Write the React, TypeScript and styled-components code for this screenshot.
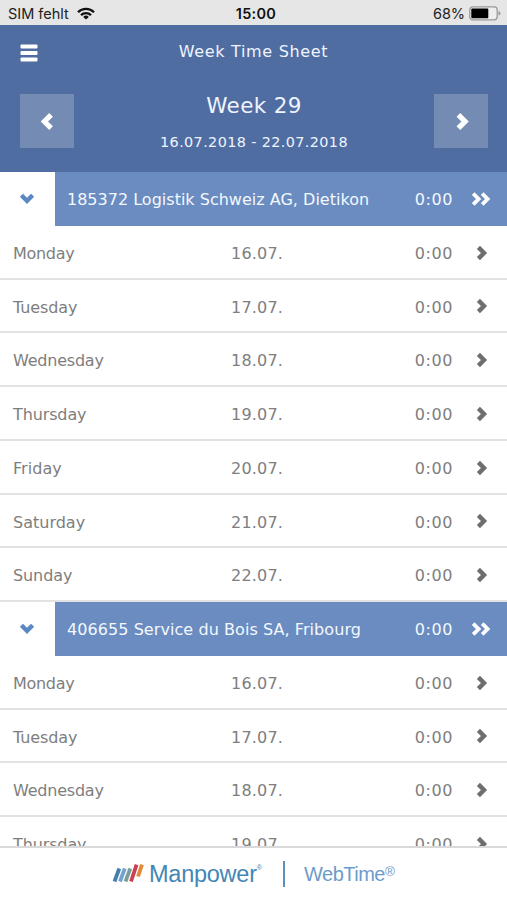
import React from "react";
import styled, { createGlobalStyle } from "styled-components";

const GlobalStyle = createGlobalStyle`
  * { box-sizing: border-box; }
  body { margin: 0; background: #fff; }
`;

const Screen = styled.div`
  width: 507px;
  height: 900px;
  display: flex;
  flex-direction: column;
  overflow: hidden;
  background: #fff;
  font-family: "DejaVu Sans", Verdana, sans-serif;
  font-size: 16px;
  white-space: nowrap;
`;

const StatusBar = styled.div`
  height: 25px;
  flex: none;
  display: grid;
  grid-template-columns: 1fr auto 1fr;
  align-items: center;
  padding: 2px 6px 0 8px;
  background: #e6e6e6;
  color: #222;
  font: 14.5px Inter, sans-serif;
`;

const StatusGroup = styled.div<{ $end?: boolean }>`
  display: flex;
  align-items: center;
  justify-content: ${(p) => (p.$end ? "flex-end" : "flex-start")};
  gap: ${(p) => (p.$end ? 4 : 8)}px;
`;

const Clock = styled.span`
  padding-left: 3px;
  font-weight: 600;
  letter-spacing: 0.3px;
  color: #111;
`;

const StatusText = styled.span<{ $spacing: number }>`
  letter-spacing: ${(p) => p.$spacing}px;
`;

const Header = styled.header`
  height: 147px;
  flex: none;
  background: #506da2;
  color: #eef4ff;
`;

const TitleBar = styled.div`
  height: 54px;
  display: grid;
  grid-template-columns: 54px 1fr 54px;
  align-items: center;
  text-align: center;
`;

const MenuButton = styled.button`
  display: flex;
  border: 0;
  padding: 1px 0 0 20px;
  background: none;
`;

const Title = styled.h1<{ $size: number; $spacing: number }>`
  margin: 0;
  font-size: ${(p) => p.$size}px;
  line-height: 24px;
  font-weight: 400;
  letter-spacing: ${(p) => p.$spacing}px;
`;

const WeekBar = styled.div`
  display: flex;
  justify-content: space-between;
  padding: 15px 19px 0 20px;
`;

const StepButton = styled.button`
  width: 54px;
  height: 54px;
  display: flex;
  align-items: center;
  justify-content: center;
  padding: 0;
  border: 0;
  background: #748cb4;
`;

const WeekInfo = styled.div`
  text-align: center;
`;

const Dates = styled.div`
  margin-top: 14px;
  font-size: 14.4px;
  line-height: 20px;
  letter-spacing: 0.38px;
`;

const List = styled.main`
  flex: 1;
  min-height: 0;
  overflow: hidden;
`;

const GroupHeader = styled.div`
  height: 53.75px;
  display: grid;
  grid-template-columns: 54.6px 1fr 66px 54px;
  grid-template-rows: 100%;
  background: #6a8cc0;
  color: #f3f8ff;
  line-height: 55.5px;
`;

const Toggle = styled.div`
  display: flex;
  align-items: center;
  justify-content: center;
  padding-bottom: 1px;
  background: #fff;
`;

const Company = styled.div<{ $spacing: number }>`
  padding-left: 12.4px;
  letter-spacing: ${(p) => p.$spacing}px;
`;

const DayRow = styled.div`
  height: 53.75px;
  display: grid;
  grid-template-columns: 231px 156px 66px 54px;
  grid-template-rows: 100%;
  border-bottom: 2px solid #e2e2e2;
  color: #7e7e7e;
  line-height: 55px;
`;

const Day = styled.div<{ $spacing: number }>`
  padding-left: 13px;
  letter-spacing: ${(p) => p.$spacing}px;
`;

const DateCell = styled.div`
  letter-spacing: 0.2px;
`;

const Hours = styled.div`
  text-align: right;
  letter-spacing: 0.6px;
`;

const Go = styled.div<{ $drop?: number }>`
  display: flex;
  align-items: center;
  justify-content: center;
  padding-top: ${(p) => p.$drop ?? 0}px;
  padding-left: 1px;
`;

const Footer = styled.footer`
  height: 54px;
  flex: none;
  display: flex;
  align-items: center;
  border-top: 2px solid #d9d9d9;
  padding-left: 112px;
  background: #fff;
  font-family: "Liberation Sans", Arial, sans-serif;
`;

const Brand = styled.span`
  margin-left: 5px;
  width: 113px;
  color: #4486b5;
  font-size: 23.5px;
  letter-spacing: -0.25px;
`;

const Mark = styled.sup<{ $size: number }>`
  font-size: ${(p) => p.$size}px;
  line-height: 0;
  vertical-align: ${(p) => (p.$size < 8 ? 12 : 5)}px;
  letter-spacing: 0;
`;

const Divider = styled.span`
  width: 2px;
  height: 26px;
  margin: 0 19px 0 21px;
  background: #5b90bd;
`;

const Product = styled.span`
  padding-top: 1px;
  color: #6c9cc9;
  font-size: 20px;
  letter-spacing: -0.5px;
`;

type Direction = "left" | "right" | "down";
const paths: Record<Direction, string> = {
  left: "M11 2.4 5.4 8l5.6 5.6",
  right: "M5.4 2.4 11 8l-5.6 5.6",
  down: "M2.4 5.2 8 10.8l5.6-5.6",
};

function Chevron({ dir, color, size = 16, stroke = 4.4 }: { dir: Direction; color: string; size?: number; stroke?: number }) {
  return (
    <svg width={size} height={size} viewBox="0 0 16 16" fill="none" stroke={color} strokeWidth={stroke}>
      <path d={paths[dir]} />
    </svg>
  );
}

function DoubleChevron() {
  return (
    <svg width="20" height="16" viewBox="0 0 20 16" fill="none" stroke="#fff" strokeWidth="3.8">
      <path d="M2.2 2.6 7.6 8l-5.4 5.4M11.2 2.6 16.6 8l-5.4 5.4" />
    </svg>
  );
}

const days = [
  { name: "Monday", date: "16.07.", spacing: -0.3 },
  { name: "Tuesday", date: "17.07.", spacing: -0.12 },
  { name: "Wednesday", date: "18.07.", spacing: -0.22 },
  { name: "Thursday", date: "19.07.", spacing: -0.12 },
  { name: "Friday", date: "20.07.", spacing: 0.05 },
  { name: "Saturday", date: "21.07.", spacing: 0 },
  { name: "Sunday", date: "22.07.", spacing: -0.1 },
];

function Group({ company, spacing, rows }: { company: string; spacing: number; rows: typeof days }) {
  return (
    <section>
      <GroupHeader>
        <Toggle><Chevron dir="down" color="#5c88c2" /></Toggle>
        <Company $spacing={spacing}>{company}</Company>
        <Hours>0:00</Hours>
        <Go><DoubleChevron /></Go>
      </GroupHeader>
      {rows.map((d) => (
        <DayRow key={d.name}>
          <Day $spacing={d.spacing}>{d.name}</Day>
          <DateCell>{d.date}</DateCell>
          <Hours>0:00</Hours>
          <Go $drop={2}><Chevron dir="right" color="#6e6e6e" /></Go>
        </DayRow>
      ))}
    </section>
  );
}

export default function App() {
  return (
    <Screen>
      <GlobalStyle />
      <StatusBar>
        <StatusGroup>
          <StatusText $spacing={0}>SIM fehlt</StatusText>
          <svg width="18" height="13" viewBox="0 0 18 13" fill="none" stroke="#111" strokeWidth="2.3">
            <path d="M1 5.2a11.4 11.4 0 0 1 16 0M4 8.2a7.2 7.2 0 0 1 10 0" />
            <path d="M9 12.6 6.2 9.9a4 4 0 0 1 5.6 0z" fill="#111" stroke="none" />
          </svg>
        </StatusGroup>
        <Clock>15:00</Clock>
        <StatusGroup $end>
          <StatusText $spacing={-0.1}>68%</StatusText>
          <svg width="32" height="15" viewBox="0 0 32 15">
            <rect x="0.8" y="0.8" width="27.4" height="13" rx="3" fill="#eee" stroke="#999" strokeWidth="1.3" />
            <rect x="2.3" y="2.4" width="17" height="9.8" rx="1" fill="#000" />
            <path d="M29.5 5q2 .6 2 2.3t-2 2.3z" fill="#999" />
          </svg>
        </StatusGroup>
      </StatusBar>
      <Header>
        <TitleBar>
          <MenuButton aria-label="Menu">
            <svg width="18" height="18" viewBox="0 0 18 18" fill="#fff">
              <rect x="0.5" y="0.5" width="17" height="3.9" rx="1" />
              <rect x="0.5" y="7" width="17" height="3.9" rx="1" />
              <rect x="0.5" y="13.5" width="17" height="3.9" rx="1" />
            </svg>
          </MenuButton>
          <Title $size={16} $spacing={0.68}>Week Time Sheet</Title>
        </TitleBar>
        <WeekBar>
          <StepButton aria-label="Previous week"><Chevron dir="left" color="#fff" size={19} /></StepButton>
          <WeekInfo>
            <Title as="h2" $size={21.5} $spacing={0.35}>Week 29</Title>
            <Dates>16.07.2018 - 22.07.2018</Dates>
          </WeekInfo>
          <StepButton aria-label="Next week"><Chevron dir="right" color="#fff" size={19} /></StepButton>
        </WeekBar>
      </Header>
      <List>
        <Group company="185372 Logistik Schweiz AG, Dietikon" spacing={0.01} rows={days} />
        <Group company="406655 Service du Bois SA, Fribourg" spacing={0.07} rows={days.slice(0, 4)} />
      </List>
      <Footer>
        <svg width="32" height="20" viewBox="0 0 32 20" fill="none" strokeWidth="3.8">
          <path d="M2.5 17.5 7.3 4.5" stroke="#447fae" />
          <path d="M8 17.5l4.8-13" stroke="#75a1d0" />
          <path d="M13.5 17.5l4.8-13" stroke="#799e98" />
          <path d="M19 17.5 24.6 0.7" stroke="#cb4055" />
          <path d="M26 12.5l4-11.8" stroke="#e38a35" />
        </svg>
        <Brand>Manpower<Mark $size={7}>®</Mark></Brand>
        <Divider />
        <Product>WebTime<Mark $size={13.5}>®</Mark></Product>
      </Footer>
    </Screen>
  );
}
